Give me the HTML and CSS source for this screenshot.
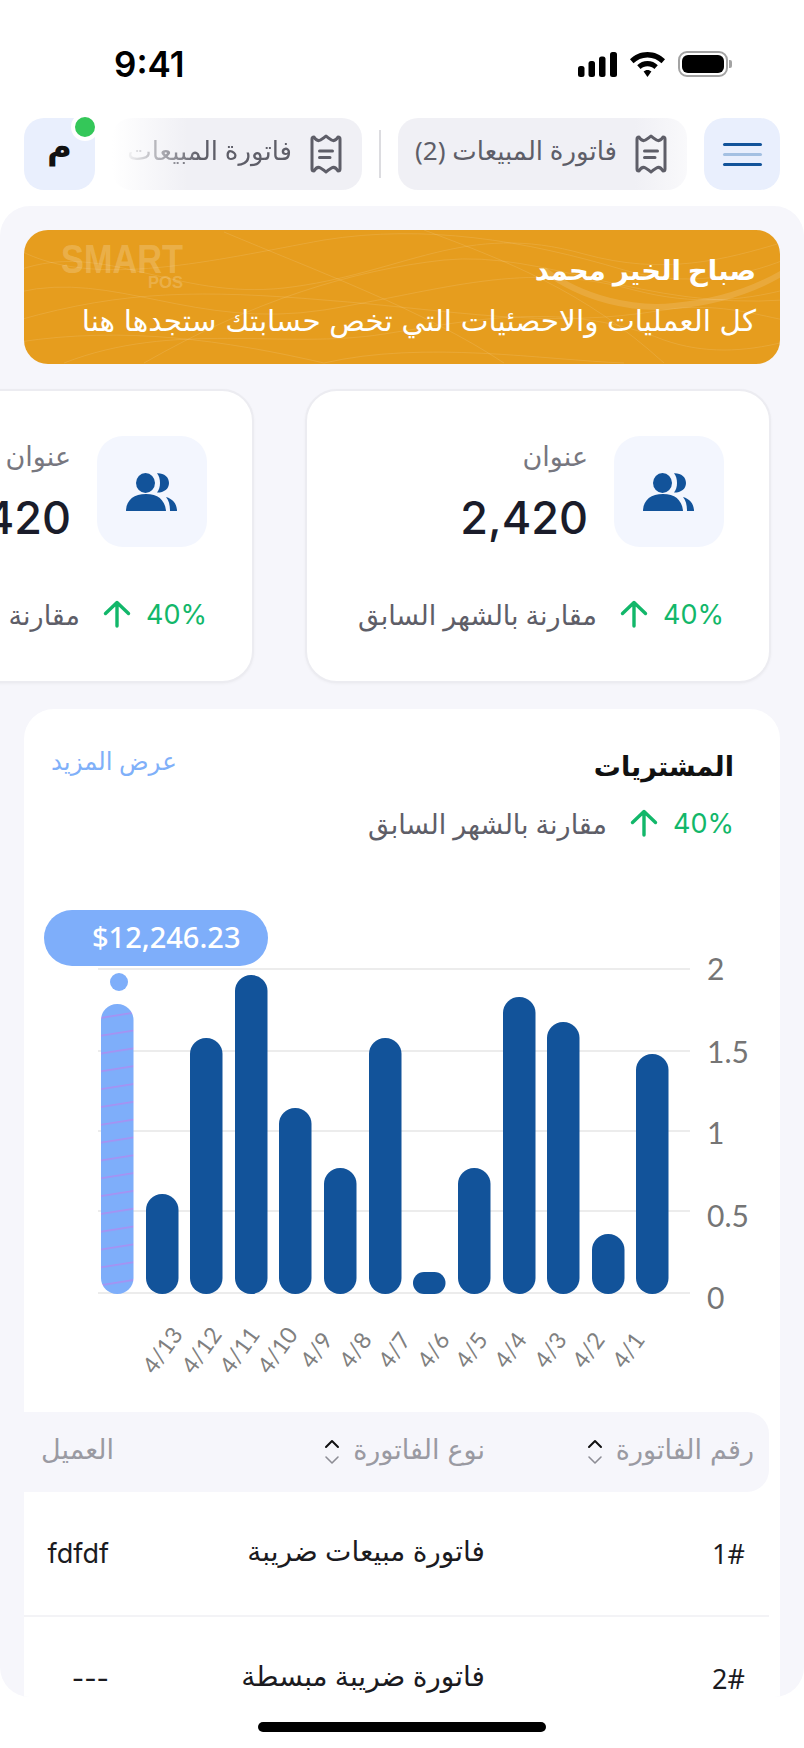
FILE: index.html
```html
<!DOCTYPE html>
<html lang="ar" dir="rtl">
<head>
  <meta charset="UTF-8">
  <meta name="viewport" content="width=device-width, initial-scale=1.0">
  <title>فاتورة المبيعات</title>
  <link rel="stylesheet" href="styles.css">
</head>
<body>
  <svg class="defs" width="0" height="0" aria-hidden="true">
    <symbol id="receipt" viewBox="0 0 34 40">
      <path d="M3 5Q3 3 5 3Q8 8 11.500 6Q15 4 17 2Q19 4 22.500 6Q26 8 29 3Q31 3 31 5V35Q31 37 29 37Q26 32 22.500 34Q19 36 17 38Q15 36 11.500 34Q8 32 5 37Q3 37 3 35Z" fill="none" stroke="currentColor" stroke-width="3" stroke-linejoin="round"/>
      <path d="M10.500 17H23.500M10.500 23.500H21" fill="none" stroke="currentColor" stroke-width="3" stroke-linecap="round"/>
    </symbol>
    <symbol id="people" viewBox="0 0 52 38">
      <ellipse cx="19.500" cy="10" rx="9.500" ry="10"/>
      <path d="M0 38C0 27 8 21 20 21C32 21 39 27 40 38Z"/>
      <path d="M31 .3C38 0 43 4 43 10C43 16 38 19.700 31 19.600C35 15 35 5 31 .3Z"/>
      <path d="M40 24C47 26 51 31 51 38H44C44 32 43 28 40 24Z"/>
    </symbol>
    <symbol id="arrow-up" viewBox="0 0 28 28">
      <path d="M14 2.500V26M2.500 13.500L14 2.500L25.500 13.500" fill="none" stroke="currentColor" stroke-width="3.400" stroke-linecap="round" stroke-linejoin="round"/>
    </symbol>
    <symbol id="sort" viewBox="0 0 16 26">
      <path d="M2 8L8 2L14 8" fill="none" stroke="#111" stroke-width="2" stroke-linecap="round" stroke-linejoin="round"/>
      <path d="M2 18L8 24L14 18" fill="none" stroke="#8d8d95" stroke-width="1.600" stroke-linecap="round" stroke-linejoin="round"/>
    </symbol>
  </svg>

  <div class="status-bar" dir="ltr">
    <span class="time">9:41</span>
    <div class="status-icons">
      <svg width="39" height="25" viewBox="0 0 39 25">
        <rect x="0" y="14" width="6.500" height="11" rx="2.500"/>
        <rect x="10.500" y="9" width="6.500" height="16" rx="2.500"/>
        <rect x="21" y="4.500" width="6.500" height="20.500" rx="2.500"/>
        <rect x="32" y="0" width="7" height="25" rx="2.500"/>
      </svg>
      <svg width="35" height="25" viewBox="0 0 35 25">
        <path d="M17.500 0C24.500 0 30.500 2.800 35 7.300L31.500 11.200C28 7.600 23 5.400 17.500 5.400C12 5.400 7 7.600 3.500 11.200L0 7.300C4.500 2.800 10.500 0 17.500 0Z"/>
        <path d="M17.500 9C21.500 9 25 10.600 27.800 13.200L24.400 17C22.600 15.300 20.200 14.300 17.500 14.300C14.800 14.300 12.400 15.300 10.600 17L7.200 13.200C10 10.600 13.500 9 17.500 9Z"/>
        <path d="M17.500 18C19 18 20.400 18.600 21.400 19.500L17.500 25L13.600 19.500C14.600 18.600 16 18 17.500 18Z"/>
      </svg>
      <div class="battery"><span class="battery-level"></span></div>
    </div>
  </div>

  <nav class="top-bar">
    <button class="menu-btn">
      <span class="menu-line"></span>
      <span class="menu-line light"></span>
      <span class="menu-line"></span>
    </button>
    <div class="tab tab-first">
      <svg class="tab-icon"><use href="#receipt"/></svg>
      <span class="tab-label">فاتورة المبيعات (2)</span>
    </div>
    <span class="tab-sep"></span>
    <div class="tab tab-second">
      <svg class="tab-icon"><use href="#receipt"/></svg>
      <span class="tab-label tab-fade">فاتورة المبيعات</span>
    </div>
    <div class="avatar">
      <span class="avatar-letter">م</span>
      <i class="online-dot"></i>
    </div>
  </nav>

  <main class="panel">
    <section class="banner">
      <svg class="banner-waves" viewBox="0 0 756 134" preserveAspectRatio="none">
        <path class="wave-thick" d="M520 40C560 70 610 80 650 76C695 72 730 60 760 42"/>
        <path d="M-5 40C80 10 150 70 260 58C380 44 440 -10 560 24C640 46 700 30 760 12"/>
        <path d="M-5 62C90 40 170 100 300 80C420 60 500 30 610 60C670 76 720 70 760 60"/>
        <path d="M-5 90C100 60 180 60 300 70C430 80 520 100 640 80C690 72 730 84 760 90"/>
        <path d="M-5 20C70 60 190 30 300 10C400 -6 500 10 600 40C660 58 720 46 760 30"/>
        <path d="M40 133C150 90 260 120 360 104C450 90 540 70 640 110C680 124 720 122 760 112"/>
        <path d="M120 133C230 70 330 40 420 30C520 20 620 80 760 70"/>
        <path d="M-5 112C100 96 200 110 300 133"/>
        <path d="M200 2C290 40 400 80 480 133"/>
        <path d="M400 0C480 30 560 60 640 133"/>
        <path d="M300 133C400 110 520 130 600 133"/>
      </svg>
      <svg class="banner-logo" viewBox="0 -13 124 60" aria-hidden="true">
        <text class="logo-smart" x="0" y="30" textLength="122" lengthAdjust="spacingAndGlyphs">SMART</text>
        <text class="logo-pos" x="87" y="45" textLength="35" lengthAdjust="spacingAndGlyphs">POS</text>
      </svg>
      <h1 class="banner-title">صباح الخير محمد</h1>
      <p class="banner-text">كل العمليات والاحصئيات التي تخص حسابتك ستجدها هنا</p>
    </section>

    <div class="stat-row">
      <article class="stat-card">
        <div class="stat-head">
          <div class="stat-icon"><svg><use href="#people"/></svg></div>
          <div class="stat-info">
            <div class="stat-label">عنوان</div>
            <div class="stat-value">2,420</div>
          </div>
        </div>
        <div class="trend">
          <span class="trend-pct">40%</span>
          <svg class="trend-arrow"><use href="#arrow-up"/></svg>
          <span class="trend-note">مقارنة بالشهر السابق</span>
        </div>
      </article>
      <article class="stat-card">
        <div class="stat-head">
          <div class="stat-icon"><svg><use href="#people"/></svg></div>
          <div class="stat-info">
            <div class="stat-label">عنوان</div>
            <div class="stat-value">2,420</div>
          </div>
        </div>
        <div class="trend">
          <span class="trend-pct">40%</span>
          <svg class="trend-arrow"><use href="#arrow-up"/></svg>
          <span class="trend-note">مقارنة بالشهر السابق</span>
        </div>
      </article>
    </div>

    <section class="chart-card">
      <div class="chart-head">
        <h2 class="chart-title">المشتريات</h2>
        <a class="more-link">عرض المزيد</a>
      </div>
      <div class="trend chart-trend">
        <span class="trend-pct">40%</span>
        <svg class="trend-arrow"><use href="#arrow-up"/></svg>
        <span class="trend-note">مقارنة بالشهر السابق</span>
      </div>

      <!-- chart drawn in page coordinates -->
      <svg class="chart" viewBox="24 905 756 507" width="756" height="507">
        <defs>
          <pattern id="stripes" patternUnits="userSpaceOnUse" width="60" height="17.600" patternTransform="translate(101 1017) rotate(-9)">
            <rect width="60" height="17.600" fill="#7eaefa"/>
            <rect width="60" height="1.600" fill="#a98ff2"/>
          </pattern>
        </defs>
        <g class="grid-lines">
          <rect x="98" y="968" width="592" height="2"/>
          <rect x="98" y="1050" width="592" height="2"/>
          <rect x="98" y="1130" width="592" height="2"/>
          <rect x="98" y="1210" width="592" height="2"/>
          <rect x="98" y="1292" width="592" height="2"/>
        </g>
        <g class="y-labels">
          <text x="707" y="980">2</text>
          <text x="707" y="1063">1.5</text>
          <text x="707" y="1144">1</text>
          <text x="707" y="1227">0.5</text>
          <text x="707" y="1309">0</text>
        </g>
        <rect x="101" y="1004" width="32.500" height="290" rx="16" fill="url(#stripes)"/>
        <g class="bars">
          <rect x="146" y="1194" width="32.500" height="100" rx="16"/>
          <rect x="190" y="1038" width="32.500" height="256" rx="16"/>
          <rect x="235" y="975" width="32.500" height="319" rx="16"/>
          <rect x="279" y="1108" width="32.500" height="186" rx="16"/>
          <rect x="324" y="1168" width="32.500" height="126" rx="16"/>
          <rect x="369" y="1038" width="32.500" height="256" rx="16"/>
          <rect x="413" y="1272" width="32.500" height="22" rx="11"/>
          <rect x="458" y="1168" width="32.500" height="126" rx="16"/>
          <rect x="503" y="997" width="32.500" height="297" rx="16"/>
          <rect x="547" y="1022" width="32.500" height="272" rx="16"/>
          <rect x="592" y="1234" width="32.500" height="60" rx="16"/>
          <rect x="636" y="1054" width="32.500" height="240" rx="16"/>
        </g>
        <circle cx="119" cy="982" r="9" fill="#7eaefa"/>
        <rect x="44" y="910" width="224" height="56" rx="28" fill="#7eaefa"/>
        <text class="tip-text" x="92" y="948">$12,246.23</text>
        <g class="x-labels">
          <text transform="translate(169 1355) rotate(-54)">4/13</text>
          <text transform="translate(208 1355) rotate(-54)">4/12</text>
          <text transform="translate(246 1355) rotate(-54)">4/11</text>
          <text transform="translate(284 1355) rotate(-54)">4/10</text>
          <text transform="translate(323 1355) rotate(-54)">4/9</text>
          <text transform="translate(362 1355) rotate(-54)">4/8</text>
          <text transform="translate(401 1355) rotate(-54)">4/7</text>
          <text transform="translate(440 1355) rotate(-54)">4/6</text>
          <text transform="translate(478 1355) rotate(-54)">4/5</text>
          <text transform="translate(517 1355) rotate(-54)">4/4</text>
          <text transform="translate(557 1355) rotate(-54)">4/3</text>
          <text transform="translate(595 1355) rotate(-54)">4/2</text>
          <text transform="translate(635 1355) rotate(-54)">4/1</text>
        </g>
      </svg>

      <div class="table">
        <div class="table-row table-head">
          <div class="th th-first">
            <span class="th-label">رقم الفاتورة</span>
            <svg class="sort-icon"><use href="#sort"/></svg>
          </div>
          <div class="th">
            <span class="th-label">نوع الفاتورة</span>
            <svg class="sort-icon"><use href="#sort"/></svg>
          </div>
          <div class="th"><span class="th-label">العميل</span></div>
        </div>
        <div class="table-row">
          <div class="td td-first">1#</div>
          <div class="td td-lift">فاتورة مبيعات ضريبة</div>
          <div class="td td-last">fdfdf</div>
        </div>
        <div class="table-row">
          <div class="td td-first">2#</div>
          <div class="td td-lift">فاتورة ضريبة مبسطة</div>
          <div class="td td-last">---</div>
        </div>
      </div>
    </section>
  </main>

  <div class="home-bar"><span class="home-indicator"></span></div>
</body>
</html>
```

FILE: styles.css
```css
* {
  box-sizing: border-box;
}
body {
  margin: 0;
  width: 804px;
  height: 1748px;
  overflow: hidden;
  background: #fff;
  font-family: "Noto Sans", "DejaVu Sans", sans-serif;
  color: #111;
}
.defs {
  position: absolute;
}

/* status bar */
.status-bar {
  height: 118px;
  padding: 51px 76px 0 114px;
  display: flex;
  justify-content: space-between;
  align-items: flex-start;
}
.time {
  font-family: Inter, sans-serif;
  font-size: 35px;
  font-weight: 600;
  line-height: 26px;
  color: #000;
}
.status-icons {
  display: flex;
  align-items: center;
  gap: 13px;
}
.status-icons svg {
  fill: #000;
  display: block;
}
.battery {
  position: relative;
  width: 50px;
  height: 26px;
  border: 2px solid #a3a3a3;
  border-radius: 9px;
  padding: 2px;
}
.battery::after {
  content: "";
  position: absolute;
  right: -6px;
  top: 7px;
  width: 3px;
  height: 8px;
  background: #a3a3a3;
  border-radius: 0 2px 2px 0;
}
.battery-level {
  display: block;
  height: 100%;
  background: #000;
  border-radius: 6px;
}

/* tabs row */
.top-bar {
  height: 72px;
  padding: 0 24px;
  display: flex;
  align-items: center;
}
.menu-btn {
  width: 76px;
  height: 72px;
  flex: none;
  border: 0;
  padding: 0;
  border-radius: 20px;
  background: #e9effd;
  display: flex;
  flex-direction: column;
  align-items: center;
  justify-content: center;
  gap: 7px;
}
.menu-line {
  width: 39px;
  height: 3px;
  border-radius: 2px;
  background: #12539a;
}
.menu-line.light {
  background: #a4c0e2;
}
.tab {
  height: 72px;
  border-radius: 20px;
  display: flex;
  align-items: center;
  font-size: 26px;
  color: #5e5e68;
  white-space: nowrap;
  overflow: hidden;
  flex: none;
}
.tab-label {
  padding-bottom: 8px;
}
.tab-icon {
  width: 34px;
  height: 40px;
  flex: none;
}
.tab-first {
  width: 289px;
  margin-right: 17px;
  padding-right: 19px;
  gap: 17px;
  background: linear-gradient(to left, #f9f9fb, #f0f0f5 18%);
}
.tab-sep {
  width: 2px;
  height: 48px;
  flex: none;
  margin: 0 17px;
  background: #dcdce0;
}
.tab-second {
  width: 250px;
  padding-right: 19px;
  gap: 17px;
  background: linear-gradient(to right, #fff, #f0f0f5 30%);
}
.tab-fade {
  -webkit-mask-image: linear-gradient(to right, rgba(0, 0, 0, .05), #000 45%);
  mask-image: linear-gradient(to right, rgba(0, 0, 0, .05), #000 45%);
}
.avatar {
  position: relative;
  width: 71px;
  height: 72px;
  flex: none;
  margin-right: auto;
  border-radius: 20px;
  background: #e9effd;
  display: flex;
  align-items: center;
  justify-content: center;
  font-size: 34px;
  font-weight: 700;
}
.avatar-letter {
  padding-bottom: 18px;
}
.online-dot {
  position: absolute;
  left: 47px;
  top: -5px;
  width: 28px;
  height: 28px;
  border: 4px solid #fff;
  border-radius: 50%;
  background: #34c759;
}

/* main panel */
.panel {
  margin-top: 16px;
  height: 1491px;
  padding-top: 24px;
  background: #f6f6fb;
  border-radius: 30px;
  overflow: hidden;
}
.banner {
  position: relative;
  height: 134px;
  margin: 0 24px;
  padding: 20px 24px 0;
  border-radius: 24px;
  background: #e69d1e;
  color: #fff;
  overflow: hidden;
}
.banner-waves {
  position: absolute;
  left: 0;
  top: 0;
  width: 100%;
  height: 100%;
  fill: none;
  stroke: rgba(255, 255, 255, .11);
  stroke-width: 1;
}
.wave-thick {
  stroke-width: 6;
  stroke: rgba(255, 255, 255, .13);
}
.banner-logo {
  position: absolute;
  left: 37px;
  top: 0;
  width: 124px;
  height: 60px;
  direction: ltr;
}
.logo-smart,
.logo-pos {
  font-family: "Liberation Sans", sans-serif;
  font-weight: 700;
  fill: rgba(255, 255, 255, .2);
  font-size: 41px;
}
.logo-pos {
  font-size: 16px;
}
.banner-title {
  position: relative;
  margin: 0;
  font-size: 27.500px;
  line-height: 40px;
  font-weight: 700;
}
.banner-text {
  position: relative;
  margin: 10px 0 0;
  font-size: 29.500px;
  word-spacing: 1px;
  line-height: 40px;
  white-space: nowrap;
}

/* stat cards */
.stat-row {
  margin-top: 25px;
  padding-right: 33px;
  display: flex;
  gap: 51px;
}
.stat-card {
  width: 466px;
  height: 294px;
  flex: none;
  padding: 45px 45px 0 0;
  background: #fff;
  border: 2px solid #ececf1;
  border-radius: 32px;
  box-shadow: 0 1px 3px rgba(0, 0, 0, .04);
}
.stat-head {
  display: flex;
  gap: 26px;
}
.stat-icon {
  width: 110px;
  height: 111px;
  flex: none;
  border-radius: 26px;
  background: #f3f6fe;
  display: flex;
  align-items: center;
  justify-content: center;
}
.stat-icon svg {
  width: 52px;
  height: 38px;
  fill: #12539a;
}
.stat-info {
  padding-top: 3px;
}
.stat-label {
  font-size: 27px;
  line-height: 34px;
  color: #77777f;
}
.stat-value {
  margin-top: 17px;
  font-family: Inter, sans-serif;
  font-size: 45px;
  line-height: 56px;
  font-weight: 500;
  color: #1a1c2a;
  direction: ltr;
  text-align: right;
}
.trend {
  margin-top: 52px;
  display: flex;
  align-items: center;
  height: 30px;
}
.trend-pct {
  font-family: Inter, sans-serif;
  font-size: 27px;
  color: #12b76a;
  direction: ltr;
}
.trend-arrow {
  width: 28px;
  height: 28px;
  flex: none;
  margin: 0 15px 0 23px;
  color: #12b76a;
}
.trend-note {
  font-size: 27px;
  color: #5e5e68;
  white-space: nowrap;
}

/* chart card */
.chart-card {
  margin: 26px 24px 0;
  height: 1000px;
  padding-top: 36px;
  background: #fff;
  border-radius: 30px 30px 0 0;
}
.chart-head {
  padding: 0 46px 0 27px;
  display: flex;
  justify-content: space-between;
  align-items: flex-start;
}
.chart-title {
  margin: 1px 0 0;
  font-size: 27px;
  line-height: 40px;
  font-weight: 700;
  color: #111;
}
.more-link {
  margin-top: -2px;
  font-size: 24.500px;
  line-height: 36px;
  color: #7fb0f9;
}
.chart-trend {
  margin-top: 21px;
  height: 32px;
  padding-right: 46px;
}
.chart {
  display: block;
  margin-top: 66px;
  direction: ltr;
}
.grid-lines {
  fill: #ececec;
}
.bars {
  fill: #12539a;
}
.y-labels text {
  font-family: Lato, sans-serif;
  font-size: 30px;
  fill: #757575;
}
.tip-text {
  font-family: "Noto Sans", sans-serif;
  font-size: 29px;
  font-weight: 500;
  fill: #fff;
}
.x-labels text {
  font-family: Lato, sans-serif;
  font-size: 23px;
  fill: #808080;
  text-anchor: middle;
}

/* table */
.table {
  margin-right: 11px;
}
.table-row {
  display: grid;
  grid-template-columns: 284px 371px 90px;
  height: 125px;
  align-items: center;
  border-bottom: 2px solid #f3f3f6;
}
.table-head {
  height: 80px;
  border-bottom: 0;
  background: #f6f6fb;
  border-radius: 0 22px 22px 0;
}
.th {
  display: flex;
  align-items: center;
  gap: 13px;
  font-size: 27px;
  word-spacing: 1px;
  color: #9a9aa2;
  white-space: nowrap;
}
.th-label {
  padding-bottom: 8px;
}
.th-first {
  padding-right: 15px;
}
.sort-icon {
  width: 16px;
  height: 26px;
  flex: none;
}
.td {
  font-size: 28px;
  color: #1b1b1f;
  white-space: nowrap;
}
.td-lift {
  padding-bottom: 8px;
}
.td-first {
  padding-right: 24px;
  font-size: 27px;
}
.td-last {
  padding-right: 5px;
  font-family: Inter, sans-serif;
  font-size: 27px;
}

.home-bar {
  height: 51px;
  padding-top: 25px;
  display: flex;
  justify-content: center;
}
.home-indicator {
  width: 288px;
  height: 10px;
  border-radius: 5px;
  background: #000;
}
```
